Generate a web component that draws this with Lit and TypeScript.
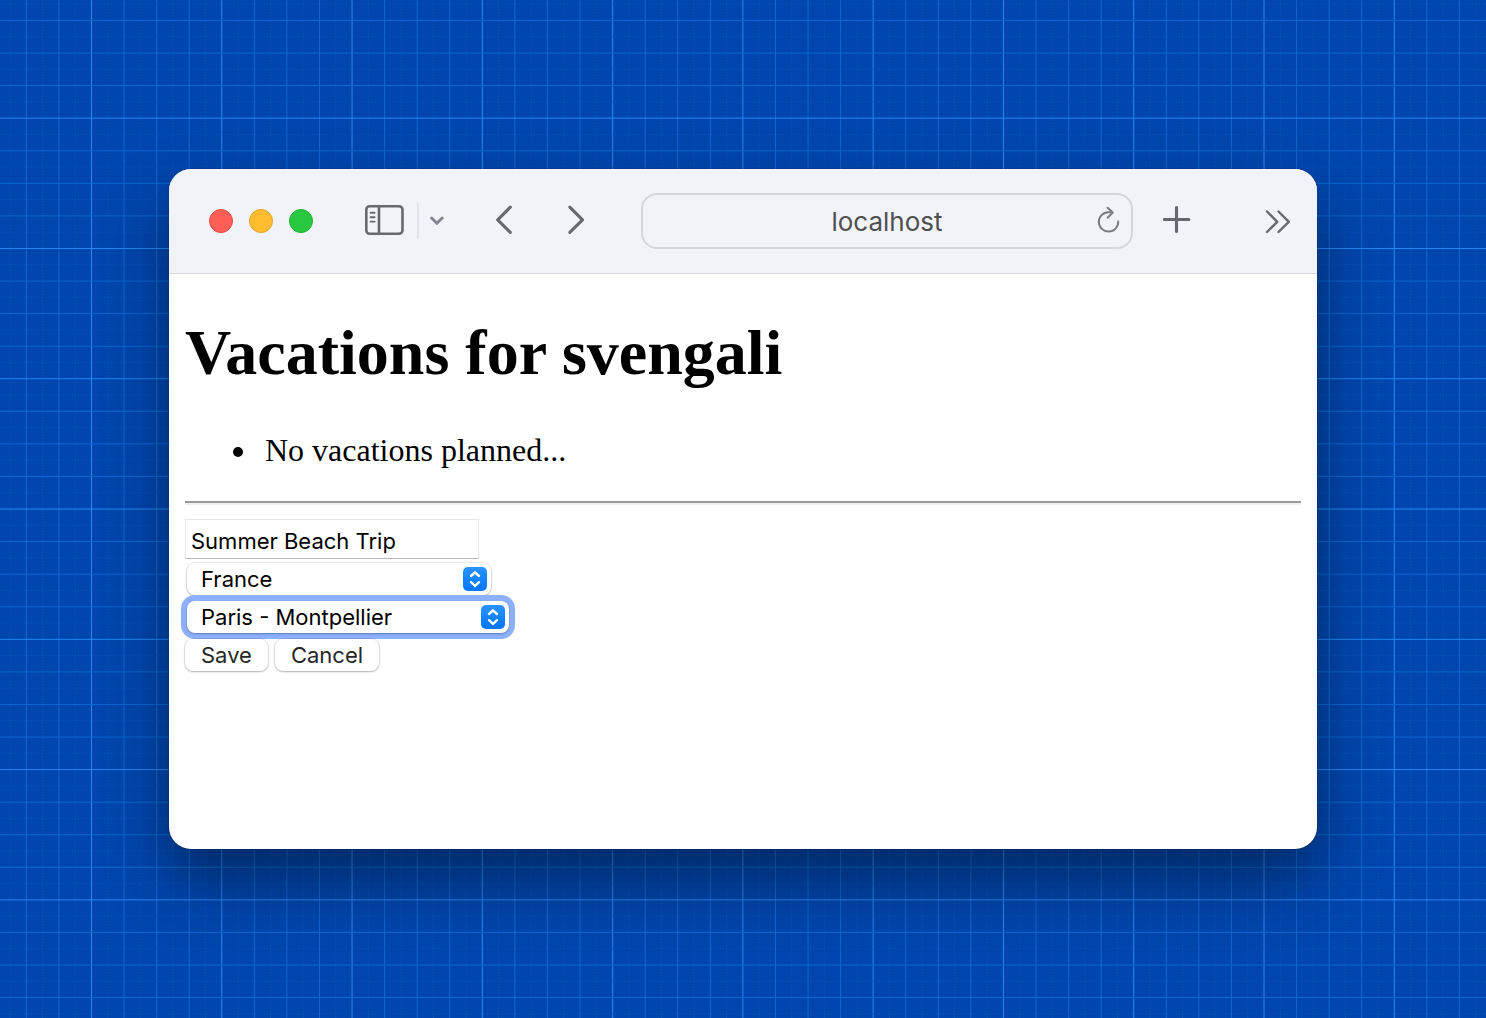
import { LitElement, html, svg, css } from "lit";
import { customElement, property } from "lit/decorators.js";

const PITCH = 130.28;
const SPAN = 3900;

type Kind = "major" | "minor" | "dotted";

/** Line positions along one axis, eight steps to each major square. */
function gridLines(origin: number): { at: number; kind: Kind }[] {
  const step = PITCH / 8;
  const lines: { at: number; kind: Kind }[] = [];
  for (let i = -8; origin + i * step < SPAN; i++) {
    const kind: Kind = i % 8 === 0 ? "major" : i % 2 === 0 ? "minor" : "dotted";
    lines.push({ at: origin + i * step, kind });
  }
  const order = { dotted: 0, minor: 1, major: 2 };
  return lines.sort((a, b) => order[a.kind] - order[b.kind]);
}

@customElement("blueprint-grid")
export class BlueprintGrid extends LitElement {
  static styles = css`
    :host {
      display: block;
      overflow: hidden;
      background: #0046ae;
    }
    .lines {
      display: block;
      width: 100%;
      height: 100%;
    }
    .major {
      stroke: #2389f2;
    }
    .minor {
      stroke: #0769cf;
    }
    .dotted {
      stroke: #0a5cc0;
      stroke-dasharray: 1 2;
      stroke-opacity: 0.7;
    }
  `;

  render() {
    return html`<svg class="lines" aria-hidden="true">
      ${gridLines(91.5).map(
        (l) => svg`<line class=${l.kind} x1=${l.at} x2=${l.at} y1="0" y2=${SPAN}></line>`
      )}
      ${gridLines(118.2).map(
        (l) => svg`<line class=${l.kind} y1=${l.at} y2=${l.at} x1="0" x2=${SPAN}></line>`
      )}
    </svg>`;
  }
}

@customElement("browser-toolbar")
export class BrowserToolbar extends LitElement {
  @property() address = "";

  static styles = css`
    :host {
      display: flex;
      align-items: center;
      height: 104px;
      padding: 0 26px 0 40px;
      background: #f2f3f9;
      border-bottom: 1px solid #d8d8dd;
      color: #68686e;
      font-family: Inter, "Liberation Sans", sans-serif;
    }
    button {
      display: flex;
      flex: none;
      padding: 0;
      border: 0;
      background: none;
      color: inherit;
    }
    svg {
      display: block;
      overflow: visible;
      fill: none;
      stroke: currentColor;
      stroke-linecap: round;
      stroke-linejoin: round;
    }
    .lights {
      display: flex;
      gap: 16px;
      margin-right: 52px;
    }
    .light {
      width: 24px;
      height: 24px;
      border-radius: 50%;
      border: 1px solid;
      box-sizing: border-box;
    }
    .close {
      background: #ff5f57;
      border-color: #e2463f;
    }
    .minimize {
      background: #febc2e;
      border-color: #e0a028;
    }
    .zoom {
      background: #28c840;
      border-color: #1dad2b;
    }
    .sidebar {
      display: flex;
      align-items: center;
      gap: 12px;
      margin-right: 50px;
    }
    .divider {
      width: 2px;
      height: 36px;
      background: #e3e4e9;
    }
    .menu {
      color: #83848f;
    }
    .history {
      display: flex;
      gap: 52px;
      margin-right: 52px;
    }
    .address {
      display: flex;
      flex: 1;
      align-items: center;
      min-width: 0;
      height: 56px;
      box-sizing: border-box;
      padding: 0 10px 0 34px;
      border: 2px solid #d5d6db;
      border-radius: 16px;
    }
    .url {
      flex: 1;
      min-width: 0;
      padding: 2px 0 0;
      border: 0;
      outline: 0;
      background: none;
      color: #4e4f50;
      font: 400 26px/32px Inter, "Liberation Sans", sans-serif;
      text-align: center;
    }
    .reload {
      color: #7b7b80;
    }
    .add {
      margin: 0 74px 0 30px;
    }
  `;

  render() {
    return html`
      <div class="lights">
        <button class="light close" aria-label="Close"></button>
        <button class="light minimize" aria-label="Minimize"></button>
        <button class="light zoom" aria-label="Zoom"></button>
      </div>
      <div class="sidebar">
        <button aria-label="Show sidebar">
          <svg width="40" height="32" viewBox="0 0 40 32" stroke-width="2.6">
            <rect x="1.3" y="1.2" width="36.2" height="27.6" rx="3.5"></rect>
            <path d="M14 1.2v27.6"></path>
            <path d="M5.6 7.7h4M5.6 12.2h4M5.6 16.6h4" stroke-width="1.9"></path>
          </svg>
        </button>
        <span class="divider"></span>
        <button class="menu" aria-label="Sidebar menu">
          <svg width="16" height="12" viewBox="0 0 16 12" stroke-width="3">
            <path d="M0.6 3l5.3 5.3L11.200 3"></path>
          </svg>
        </button>
      </div>
      <div class="history">
        <button aria-label="Back">
          <svg width="20" height="32" viewBox="0 0 20 32" stroke-width="3.1">
            <path d="M13.3 2.2L0.7 14.800l12.600 12.600"></path>
          </svg>
        </button>
        <button aria-label="Forward">
          <svg width="20" height="32" viewBox="0 0 20 32" stroke-width="3.1">
            <path d="M0.8 2.2L13.5 14.800l-12.700 12.600"></path>
          </svg>
        </button>
      </div>
      <div class="address">
        <input class="url" type="text" aria-label="Address" .value=${this.address} />
        <button class="reload" aria-label="Reload">
          <svg width="24" height="32" viewBox="0 0 24 32" stroke-width="2">
            <path d="M14.8 7.2H11.4A9.7 9.7 0 1 0 21.2 16.6"></path>
            <path d="M10.6 2.8l5.2 4.8-5.2 5.2"></path>
          </svg>
        </button>
      </div>
      <button class="add" aria-label="New tab">
        <svg width="28" height="32" viewBox="0 0 28 32" stroke-width="3.1">
          <path d="M1.3 14.5h24.500M13.500 2.500v24"></path>
        </svg>
      </button>
      <button aria-label="More toolbar items">
        <svg width="26" height="28" viewBox="0 0 26 28" stroke-width="2.4">
          <path d="M2 4.500l10.300 10.300L2 25M13.500 4.500l10.300 10.300L13.500 25"></path>
        </svg>
      </button>
    `;
  }
}

@customElement("vacation-form")
export class VacationForm extends LitElement {
  static styles = css`
    :host {
      display: block;
      font: 400 22px/28px Inter, "Liberation Sans", sans-serif;
    }
    .field {
      display: flex;
      padding: 1px 0;
    }
    .row {
      display: flex;
      gap: 7px;
      padding: 3px 0;
    }
    .inset {
      padding-left: 2px;
    }
    input,
    select,
    button {
      box-sizing: border-box;
      margin: 0;
      outline: 0;
      color: #000;
      font: inherit;
    }
    .name {
      width: 294px;
      height: 40px;
      padding: 4px 5px 0;
      border: 1px solid #e8e8e8;
      border-bottom: 1px solid #b8b8b8;
      background: #fff;
    }
    .popup {
      display: grid;
      align-items: center;
      justify-items: end;
    }
    .popup > * {
      grid-area: 1 / 1;
    }
    .arrows {
      margin-right: 4px;
      pointer-events: none;
    }
    select,
    button {
      height: 32px;
      border: 0;
      border-radius: 8px;
      background: #fff;
      box-shadow: 0 0 1px 1px rgba(0, 0, 0, 0.09), 0 1px 2px rgba(0, 0, 0, 0.24);
    }
    select {
      appearance: none;
      padding: 0 32px 0 14px;
    }
    .country {
      width: 304px;
    }
    .route {
      width: 322px;
    }
    .focused {
      box-shadow: 0 1px 2px rgba(0, 0, 0, 0.3), 0 0 0 6px #8cb0fb;
    }
    button {
      padding: 0 16px;
      color: #262626;
    }
  `;

  private arrows() {
    return html`<svg class="arrows" width="24" height="24" viewBox="0 0 24 24" aria-hidden="true">
      <defs>
        <linearGradient id="blue" x1="0" y1="0" x2="0" y2="1">
          <stop offset="0" stop-color="#2b93ff"></stop>
          <stop offset="1" stop-color="#0075fe"></stop>
        </linearGradient>
      </defs>
      <rect width="24" height="24" rx="5" fill="url(#blue)"></rect>
      <path
        d="M8 9l4-3.7 4 3.7M8 15.2l4 3.7 4-3.7"
        fill="none"
        stroke="#fff"
        stroke-width="2.4"
        stroke-linecap="round"
        stroke-linejoin="round"
      ></path>
    </svg>`;
  }

  render() {
    return html`
      <form @submit=${(e: Event) => e.preventDefault()}>
        <div class="field">
          <input class="name" type="text" aria-label="Vacation name" .value=${"Summer Beach Trip"} />
        </div>
        <div class="row inset">
          <span class="popup">
            <select class="country" aria-label="Country">
              <option>France</option>
            </select>
            ${this.arrows()}
          </span>
        </div>
        <div class="row inset">
          <span class="popup">
            <select class="route focused" aria-label="Route">
              <option>Paris - Montpellier</option>
            </select>
            ${this.arrows()}
          </span>
        </div>
        <div class="row">
          <button type="submit">Save</button>
          <button type="button">Cancel</button>
        </div>
      </form>
    `;
  }
}

@customElement("app-root")
export class AppRoot extends LitElement {
  static styles = css`
    :host {
      display: grid;
      min-height: 100vh;
    }
    .backdrop,
    .stage {
      grid-area: 1 / 1;
      min-width: 0;
    }
    .backdrop {
      contain: size;
    }
    .stage {
      display: flex;
      padding: 169px;
      z-index: 1;
    }
    .window {
      display: flex;
      flex: 1;
      flex-direction: column;
      min-width: 0;
      overflow: hidden;
      border-radius: 22px;
      background: #fff;
      box-shadow: 0 0 2px rgba(0, 0, 0, 0.4), 0 32px 64px rgba(0, 0, 0, 0.42);
    }
    .page {
      flex: 1;
      padding: 0 16px;
      color: #000;
      font: 32px/36px "Liberation Serif", "Times New Roman", serif;
    }
    h1 {
      margin: 42px 0 43px;
      font-size: 64px;
      line-height: 73px;
    }
    ul {
      margin: 0 0 33px;
      padding-left: 74px;
    }
    li {
      padding-left: 6px;
    }
    hr {
      margin: 0 0 13px;
      border: 0;
      border-top: 2px solid #9a9a9a;
      border-bottom: 2px solid #eee;
    }
  `;

  render() {
    return html`
      <blueprint-grid class="backdrop"></blueprint-grid>
      <div class="stage">
        <main class="window">
          <browser-toolbar address="localhost"></browser-toolbar>
          <div class="page">
            <h1>Vacations for svengali</h1>
            <ul>
              <li>No vacations planned...</li>
            </ul>
            <hr />
            <vacation-form></vacation-form>
          </div>
        </main>
      </div>
    `;
  }
}
